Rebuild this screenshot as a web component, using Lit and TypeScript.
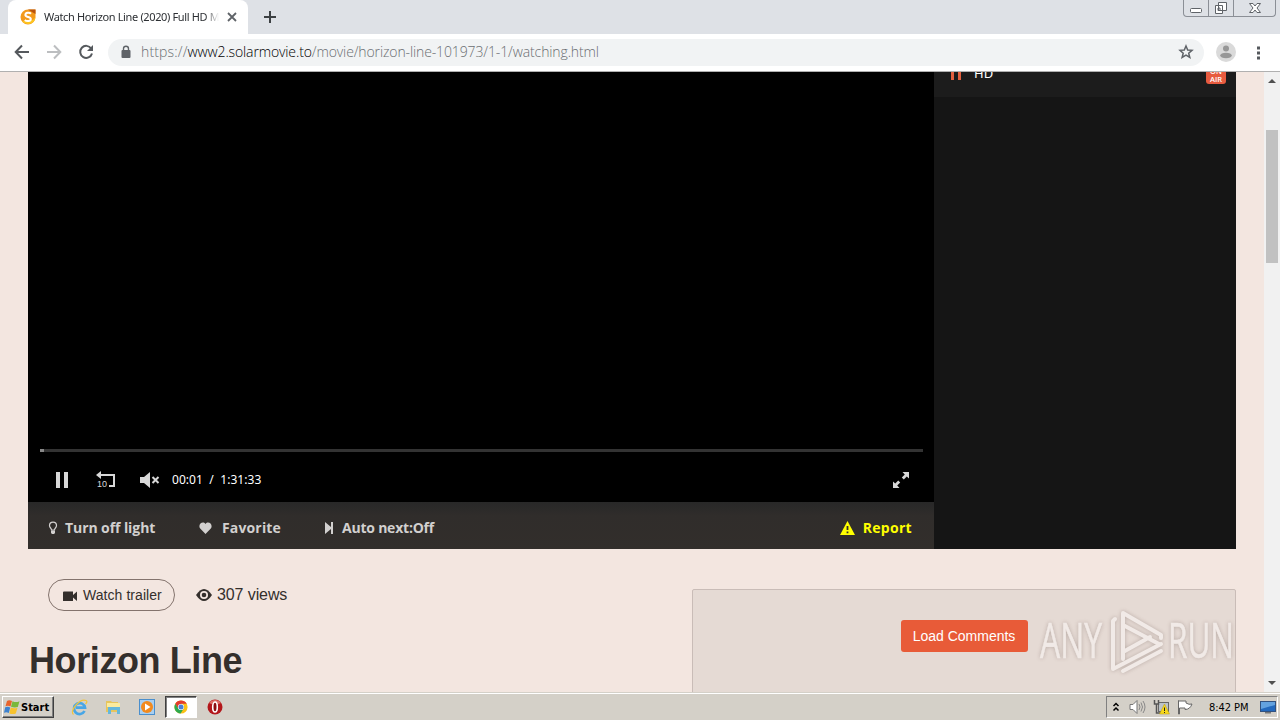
import { html, svg, css, LitElement } from 'lit';
import { customElement } from 'lit/decorators.js';

const favicon = svg`
  <svg width="16" height="16" viewBox="0 0 16 16">
    <path d="M8 .5H15.5V8A7.5 7.5 0 1 1 8 .5Z" fill="#f39a1c"/>
    <path d="M8 .5H15.5V5L12 3Z" fill="#b9540f"/>
    <path d="M2 12A7.5 7.5 0 0 0 15.5 8L13 11Z" fill="#fdc521"/>
    <path d="M11 4.7C9.5 3.2 5.4 3.4 5.4 5.9C5.4 8.6 10.8 7.4 10.8 10C10.8 12.6 6.5 12.6 4.8 11" fill="none" stroke="#fff" stroke-width="2"/>
  </svg>`;

const chromeLogo = svg`
  <svg width="14" height="14" viewBox="0 0 14 14">
    <circle cx="7" cy="7" r="6.6" fill="#fbc116"/>
    <path d="M1.3 3.7A6.6 6.6 0 0 1 12.7 3.7H7L4 8.6Z" fill="#e33b2e"/>
    <path d="M1.3 3.7A6.6 6.6 0 0 0 6.6 13.6L9.8 8.6L4.2 8.6Z" fill="#2da94f"/>
    <circle cx="7" cy="7" r="3.1" fill="#fff"/>
    <circle cx="7" cy="7" r="2.5" fill="#4a7fd6"/>
  </svg>`;

@customElement('browser-bar')
export class BrowserBar extends LitElement {
  static styles = css`
    :host {
      display: block;
      height: 72px;
      font-family: "DejaVu Sans Condensed", "DejaVu Sans", sans-serif;
    }

    .tabs {
      height: 34px;
      display: flex;
      background: #dee1e6;
    }

    .tab {
      display: flex;
      align-items: center;
      width: 240px;
      box-sizing: border-box;
      margin-left: 8px;
      padding: 0 10px 0 12px;
      background: #fff;
      border-radius: 8px 8px 0 0;
      font-size: 11px;
      color: #2c2f33;
    }

    .title {
      width: 175px;
      margin: -1px 0 0 8px;
      overflow: hidden;
      white-space: nowrap;
      font-family: "Noto Sans", sans-serif;
      letter-spacing: -0.36px;
      -webkit-mask-image: linear-gradient(to right, #000 92%, transparent);
      mask-image: linear-gradient(to right, #000 92%, transparent);
    }

    .close {
      margin-left: 8px;
    }

    .plus {
      margin: 11px 0 0 16px;
    }

    .window {
      display: flex;
      margin-left: auto;
      margin-right: 4px;
      height: 16px;
      border: 1px solid #8b8f96;
      border-top: 0;
      border-radius: 0 0 4px 4px;
    }

    .window svg + svg {
      border-left: 1px solid #8b8f96;
    }

    .toolbar {
      display: flex;
      align-items: center;
      height: 37px;
      padding-left: 14px;
      background: #fff;
      border-bottom: 1px solid #b0b0b0;
    }

    .nav {
      margin: -1px 16px 0 0;
    }

    .address {
      display: flex;
      align-items: center;
      width: 1096px;
      height: 27px;
      margin: -1px 0 0 -2px;
      box-sizing: border-box;
      padding: 0 10px 0 12px;
      border-radius: 14px;
      background: #f1f3f4;
      color: #6a6e72;
      font: 300 14px "Open Sans", sans-serif;
      white-space: nowrap;
    }

    .url {
      margin: -1px 0 0 9px;
      letter-spacing: -0.12px;
    }

    .scheme {
      letter-spacing: 0.15px;
    }

    .host {
      letter-spacing: -0.13px;
      color: #000;
    }

    .star {
      margin-left: auto;
    }

    .avatar {
      margin: -1px 20px 0 12px;
    }
  `;

  render() {
    return html`
      <div class="tabs">
        <div class="tab">
          ${favicon}
          <span class="title">Watch Horizon Line (2020) Full HD M</span>
          <svg class="close" width="10" height="10" viewBox="0 0 10 10"><path d="M1 1L9 9M9 1L1 9" stroke="#5f6368" stroke-width="1.8"/></svg>
        </div>
        <svg class="plus" width="12" height="12" viewBox="0 0 12 12"><path d="M6 0V12M0 6H12" stroke="#3c4043" stroke-width="2"/></svg>
        <div class="window">
          <svg width="24" height="16" viewBox="0 0 24 16"><rect x="6.5" y="8.500" width="11" height="4" rx="1" fill="#fff" stroke="#5f6368"/></svg>
          <svg width="24" height="16" viewBox="0 0 24 16"><path d="M9.500 2.500H17.500V10.500H9.500ZM6.500 5.500H13.500V13.500H6.500ZM9 8H11V10.500H9Z" fill="#fff" stroke="#5f6368"/></svg>
          <svg width="41" height="16" viewBox="0 0 41 16"><path d="M15.500 3.500H19L21 6L23 3.500H26.500L23 8L26.500 12.500H23L21 10L19 12.500H15.500L19 8Z" fill="#fff" stroke="#5f6368"/></svg>
        </div>
      </div>
      <div class="toolbar">
        <svg class="nav" width="16" height="16" viewBox="0 0 16 16"><path d="M15 8H2M8 1.500L1.700 8L8 14.500" fill="none" stroke="#55595d" stroke-width="2"/></svg>
        <svg class="nav" width="16" height="16" viewBox="0 0 16 16"><path d="M1 8H14M8 1.500L14.300 8L8 14.500" fill="none" stroke="#bcbec0" stroke-width="2"/></svg>
        <svg class="nav" width="16" height="16" viewBox="0 0 16 16"><path d="M13.200 4.500A6 6 0 1 0 14 9.500" fill="none" stroke="#55595d" stroke-width="2"/><path d="M15 1V7H9Z" fill="#55595d"/></svg>
        <div class="address">
          <svg width="12" height="14" viewBox="0 0 12 14"><rect x="1.500" y="5" width="9" height="8" rx="1" fill="#5f6368"/><path d="M3.500 5.500V3.700A2.500 2.500 0 0 1 8.500 3.700V5.500" fill="none" stroke="#5f6368" stroke-width="1.400"/></svg>
          <span class="url"><span class="scheme">https://</span><span class="host">www2.solarmovie.to</span>/movie/horizon-line-101973/1-1/watching.html</span>
          <svg class="star" width="16" height="16" viewBox="0 0 16 16"><path d="M8 2L9.700 6L14 6.300L10.700 9.200L11.800 13.500L8 11.200L4.100 13.500L5.200 9.200L2 6.300L6.300 6Z" fill="none" stroke="#5f6368" stroke-width="1.500"/></svg>
        </div>
        <svg class="avatar" width="20" height="20" viewBox="0 0 20 20"><circle cx="10" cy="10" r="10" fill="#dadada"/><circle cx="10" cy="6.500" r="3" fill="#979797"/><ellipse cx="10" cy="13.500" rx="5.800" ry="2.800" fill="#979797"/></svg>
        <svg width="4" height="16" viewBox="0 0 4 16"><path d="M1 1.500h3v3h-3zM1 6.500h3v3h-3zM1 11.500h3v3h-3z" fill="#55595d"/></svg>
      </div>
    `;
  }
}

@customElement('movie-page')
export class MoviePage extends LitElement {
  static styles = css`
    :host {
      display: flex;
      height: 620px;
      overflow: hidden;
      background: #f3e6e0;
      font-family: "Liberation Sans", Arial, sans-serif;
    }

    .content {
      width: 1208px;
      padding: 0 28px;
    }

    .watch {
      display: flex;
      height: 477px;
    }

    .player {
      display: flex;
      flex-direction: column;
      justify-content: flex-end;
      width: 906px;
      background: #000;
    }

    .progress {
      height: 3px;
      margin: 0 11px 0 12px;
      background: #333;
    }

    .progress i {
      display: block;
      width: 4px;
      height: 3px;
      background: #888;
    }

    .controls {
      display: flex;
      align-items: center;
      height: 50px;
      padding: 6px 24px 0 27px;
      box-sizing: border-box;
      color: #fff;
      font: 12px "Noto Sans", sans-serif;
    }

    .rewind {
      margin-left: 27px;
    }

    .mute {
      margin: 0 12px 0 23px;
    }

    .time {
      margin-top: -1px;
      white-space: pre;
      letter-spacing: 0.06px;
    }

    .full {
      margin-left: auto;
    }

    .actions {
      display: flex;
      align-items: center;
      height: 47px;
      box-sizing: border-box;
      padding: 4px 22px 0 20px;
      background: linear-gradient(#282828, #302d2b 14px, #322e2b);
      color: #d2d0cf;
      font: bold 14px "Open Sans", sans-serif;
      white-space: nowrap;
    }

    .actions span {
      margin-top: -1px;
    }

    .light {
      margin-left: 7px;
      width: 134px;
      letter-spacing: -0.08px;
    }

    .fav {
      margin-left: 10px;
      width: 102px;
      letter-spacing: 0.15px;
    }

    .next {
      margin-left: 8px;
      letter-spacing: -0.22px;
    }

    .warn {
      margin-left: auto;
    }

    .report {
      margin-left: 8px;
      color: #ff0;
      letter-spacing: 0.3px;
    }

    .servers {
      flex: 1;
      background: #151515;
    }

    .server {
      display: flex;
      height: 25px;
      padding: 0 10px 0 17px;
      background: #1c1c1c;
      overflow: hidden;
      color: #fff;
      font: 13px "Noto Sans", sans-serif;
    }

    .server .name {
      margin: -8px 0 0 13px;
    }

    .air {
      width: 20px;
      height: 20px;
      margin: -8px 0 0 auto;
      padding-top: 3px;
      box-sizing: border-box;
      border-radius: 3px;
      background: #e75b3f;
      font: 600 7.5px/8px "Open Sans", sans-serif;
      text-align: center;
    }

    .below {
      display: flex;
      justify-content: space-between;
    }

    .info {
      padding-top: 30px;
      color: #342f2c;
    }

    .meta {
      display: flex;
      align-items: center;
      padding-left: 20px;
      font-size: 16px;
    }

    .trailer {
      display: flex;
      align-items: center;
      width: 127px;
      height: 32px;
      box-sizing: border-box;
      margin-right: 21px;
      padding-left: 14px;
      border: 1px solid #83736d;
      border-radius: 16px;
      font-size: 14px;
      gap: 5px;
      white-space: nowrap;
      letter-spacing: 0.06px;
    }

    .trailer svg {
      margin-top: 2px;
    }

    .views {
      margin-left: 5px;
      letter-spacing: -0.1px;
    }

    h1 {
      margin: 29px 0 0 1px;
      font-size: 36px;
      line-height: 42px;
      letter-spacing: -0.4px;
    }

    .comments {
      width: 542px;
      height: 140px;
      margin-top: 40px;
      border: 1px solid #c9bcb7;
      border-radius: 2px;
      background: #e5dad4;
    }

    .load {
      width: 127px;
      height: 32px;
      margin: 30px auto 0;
      border-radius: 3px;
      background: #e85b38;
      color: #fff;
      font-size: 14px;
      line-height: 32px;
      text-align: center;
    }

    .scroll {
      display: flex;
      flex-direction: column;
      align-items: center;
      justify-content: space-between;
      width: 16px;
      padding: 7px 0;
      box-sizing: border-box;
      background: #f1f1f1;
    }

    .thumb {
      width: 12px;
      height: 133px;
      margin: 47px 0 auto;
      background: #c1c1c1;
    }
  `;

  render() {
    return html`
      <div class="content">
        <div class="watch">
          <div class="player">
            <div class="progress"><i></i></div>
            <div class="controls">
              <svg width="14" height="16" viewBox="0 0 14 16"><path d="M1 0h4v16h-4zM9 0h4v16h-4z" fill="#d8d8d8"/></svg>
              <svg class="rewind" width="21" height="18" viewBox="0 0 21 18"><path d="M5 4H18V15H13" fill="none" stroke="#d8d8d8" stroke-width="2"/><path d="M0 4L5 0V8Z" fill="#d8d8d8"/><text x="1" y="16" fill="#d8d8d8" font-size="9" font-family="Liberation Sans">10</text></svg>
              <svg class="mute" width="20" height="16" viewBox="0 0 20 16"><path d="M0 5H4L10 0V16L4 11H0Z" fill="#d8d8d8"/><path d="M12.500 5L18.500 11M18.500 5L12.500 11" stroke="#d8d8d8" stroke-width="2"/></svg>
              <span class="time">00:01  /  1:31:33</span>
              <svg class="full" width="18" height="18" viewBox="0 0 18 18"><path d="M10.500 1H17V7.500L14.800 5.500L11.800 8.500L9.800 6.500L12.800 3.500ZM7.500 17H1V10.500L3.200 12.500L6.200 9.500L8.200 11.500L5.200 14.500Z" fill="#d8d8d8"/></svg>
            </div>
            <div class="actions">
              <svg width="10" height="14" viewBox="0 0 10 14"><path d="M3.500 9C3.500 7 1.500 7 1.500 4.600A3.500 3.500 0 0 1 8.500 4.600C8.500 7 6.500 7 6.500 9Z" fill="none" stroke="#d2d0cf" stroke-width="1.200"/><path d="M3 9.500h4v2.500l-1 1h-2l-1-1z" fill="#d2d0cf"/></svg>
              <span class="light">Turn off light</span>
              <svg width="13" height="12" viewBox="0 0 13 12"><path d="M6.500 12L1.200 6.600C-1.600 3 3.500-1.800 6.500 2C9.500-1.800 14.600 3 11.800 6.600Z" fill="#d2d0cf"/></svg>
              <span class="fav">Favorite</span>
              <svg width="10" height="12" viewBox="0 0 10 12"><path d="M1 0L7 5V0H9V12H7V7L1 12Z" fill="#d2d0cf"/></svg>
              <span class="next">Auto next:Off</span>
              <svg class="warn" width="15" height="14" viewBox="0 0 15 14"><path d="M7.500 0L15 14H0Z" fill="#ff0"/><path d="M7.500 5V9M7.500 10.500V12.300" stroke="#322e2b" stroke-width="1.800"/></svg>
              <span class="report">Report</span>
            </div>
          </div>
          <div class="servers">
            <div class="server">
              <svg width="10" height="8" viewBox="0 0 10 8"><path d="M0 0h3v8h-3zM7 0h3v8h-3z" fill="#e3603f"/></svg>
              <span class="name">HD</span>
              <div class="air">ON<br>AIR</div>
            </div>
          </div>
        </div>
        <div class="below">
          <div class="info">
            <div class="meta">
              <div class="trailer">
                <svg width="15" height="10" viewBox="0 0 15 10"><path d="M0 1.500Q0 .5 1 .5H10V4L14 .5V10L10 6.500V10H0Z" fill="#342f2c"/></svg>
                Watch trailer
              </div>
              <svg width="16" height="12" viewBox="0 0 16 12"><path d="M0 6Q8-6 16 6Q8 18 0 6Z" fill="#342f2c"/><circle cx="8" cy="6" r="4" fill="#f3e6e0"/><circle cx="8" cy="6" r="2.300" fill="#342f2c"/></svg>
              <span class="views">307 views</span>
            </div>
            <h1>Horizon Line</h1>
          </div>
          <div class="comments"><div class="load">Load Comments</div></div>
        </div>
      </div>
      <div class="scroll">
        <svg width="8" height="4" viewBox="0 0 8 4"><path d="M0 4L4 0L8 4Z" fill="#505050"/></svg>
        <div class="thumb"></div>
        <svg width="8" height="4" viewBox="0 0 8 4"><path d="M0 0H8L4 4Z" fill="#505050"/></svg>
      </div>
    `;
  }
}

@customElement('task-bar')
export class TaskBar extends LitElement {
  static styles = css`
    :host {
      display: flex;
      align-items: flex-start;
      height: 28px;
      box-sizing: border-box;
      padding: 3px 2px 0;
      border-top: 1px solid #d4d0c8;
      box-shadow: inset 0 1px #fff;
      background: #d4d0c8;
      color: #000;
      font: 11px "DejaVu Sans Condensed", "DejaVu Sans", sans-serif;
    }

    .start {
      display: flex;
      align-items: center;
      width: 52px;
      height: 22px;
      box-sizing: border-box;
      padding-left: 1px;
      gap: 1px;
      border: 1px solid;
      border-color: #fff #404040 #404040 #fff;
      box-shadow: inset -1px -1px #808080;
      font-weight: bold;
      white-space: nowrap;
    }

    .items {
      display: flex;
      align-items: center;
      height: 22px;
      margin-left: 8px;
    }

    .item {
      display: flex;
      justify-content: center;
      width: 34px;
    }

    .active {
      align-items: center;
      width: 32px;
      height: 22px;
      box-sizing: border-box;
      margin: 0 1px;
      border: 1px solid;
      border-color: #404040 #fff #fff #404040;
      box-shadow: inset 1px 1px #808080;
      background: #fff;
    }

    .tray {
      display: flex;
      align-items: center;
      width: 172px;
      height: 22px;
      box-sizing: border-box;
      margin-left: auto;
      padding-left: 5px;
      border: 1px solid;
      border-color: #808080 #fff #fff #808080;
      white-space: nowrap;
    }

    .sound {
      margin-left: 9px;
    }

    .net,
    .flag {
      margin-left: 7px;
    }

    .clock {
      width: 42px;
      margin: 0 9px 0 16px;
      letter-spacing: -0.05px;
    }
  `;

  render() {
    return html`
      <div class="start">
        <svg width="16" height="16" viewBox="0 0 16 16">
          <path d="M3 2Q5 .5 8 2L6.500 7.500Q4 6 1.500 7.200Z" fill="#e8642c"/>
          <path d="M8.500 2.200Q12 4 15.500 2.200L13.800 8Q10.500 9 7 7.700Z" fill="#79b83b"/>
          <path d="M1.200 8.200Q3.800 7 6.200 8.400L4.800 14Q2.300 12.600 0 13.800Z" fill="#3d82cf"/>
          <path d="M6.800 8.600Q10.200 9.900 13.500 8.700L11.800 14.500Q8.800 15.700 5.300 14.400Z" fill="#f7c22d"/>
        </svg>
        Start
      </div>
      <div class="items">
        <div class="item">
          <svg width="17" height="17" viewBox="0 0 17 17"><path d="M13.500 12A5.500 5.500 0 1 1 14 8.700H5" fill="none" stroke="#48a6e6" stroke-width="2.700"/><path d="M2.500 15.500C-2 12 9-1 15 1.500Q17 2.500 14.500 5" fill="none" stroke="#f1c43d" stroke-width="1.200"/></svg>
        </div>
        <div class="item">
          <svg width="16" height="16" viewBox="0 0 16 16"><path d="M1 2H6L7 3H13V13H1Z" fill="#e6c55e"/><path d="M2 4H15V8H2Z" fill="#fbeb9e"/><path d="M3 8H15V15H12V11H6V15H3Z" fill="#65b7dc"/></svg>
        </div>
        <div class="item">
          <svg width="16" height="16" viewBox="0 0 16 16"><rect x=".5" y=".5" width="15" height="15" fill="#a9cff0" stroke="#4a8fcd"/><circle cx="8" cy="8" r="6" fill="#f28a1e"/><path d="M6 4.500L11.500 8L6 11.500Z" fill="#fff"/></svg>
        </div>
        <div class="item active">${chromeLogo}</div>
        <div class="item">
          <svg width="16" height="16" viewBox="0 0 16 16"><circle cx="8" cy="8" r="7.500" fill="#b3161b"/><path d="M2 4A7 6 0 0 1 14 4Q8 7 2 4Z" fill="#dd6b65"/><ellipse cx="8" cy="8" rx="2.300" ry="5" fill="#8c0d11" stroke="#fff" stroke-width="1.600"/></svg>
        </div>
      </div>
      <div class="tray">
        <svg width="8" height="10" viewBox="0 0 8 10"><path d="M1.500 4L4 1.500L6.500 4M1.500 8.500L4 6L6.500 8.500" fill="none" stroke="#000" stroke-width="1.500"/></svg>
        <svg class="sound" width="17" height="16" viewBox="0 0 17 16"><path d="M1 5.500H4L8 1.500V14.500L4 10.500H1Z" fill="#fff" stroke="#777"/><path d="M10 5Q12 8 10 11M12 3.500Q15 8 12 12.500M14 2Q18 8 14 14" fill="none" stroke="#888"/></svg>
        <svg class="net" width="17" height="16" viewBox="0 0 17 16"><rect x="5.500" y="3.500" width="10" height="9" fill="#bcc3c9" stroke="#666"/><path d="M1.500 1V5H5.500V1M3.500 5V14H8" fill="none" stroke="#555" stroke-width="1.500"/><path d="M11.500 5L16.500 15H6.500Z" fill="#f8d91b" stroke="#b99810" stroke-width=".5"/><path d="M11.500 8.500V12M11.500 13V14" stroke="#222"/></svg>
        <svg class="flag" width="16" height="16" viewBox="0 0 16 16"><path d="M1.500 1.500V15H2.500V9H8V10.500Q13 10.500 15 5Q12 6 9 4V2H2Z" fill="#fff" stroke="#666"/></svg>
        <span class="clock">8:42 PM</span>
        <svg width="16" height="14" viewBox="0 0 16 14"><rect x=".5" y="1.500" width="15" height="10" fill="#2369bd" stroke="#31517f"/><path d="M1 2H15V5L1 9Z" fill="#63a2df"/><path d="M5 12H11V13.500H5Z" fill="#777"/></svg>
      </div>
    `;
  }
}

@customElement('app-root')
export class AppRoot extends LitElement {
  static styles = css`
    :host {
      display: block;
      position: relative;
      width: 1280px;
      height: 720px;
      overflow: hidden;
    }

    .mark {
      position: absolute;
      left: 1034px;
      top: 602px;
      filter: drop-shadow(0 0 2px rgba(90, 70, 65, 0.4));
      opacity: 0.8;
    }

    .mark text {
      font-family: "Open Sans", sans-serif;
      font-weight: 400;
      font-size: 50px;
      fill: #f5efec;
      stroke: #f5efec;
      stroke-width: 0.6px;
    }
  `;

  render() {
    return html`
      <browser-bar></browser-bar>
      <movie-page></movie-page>
      <task-bar></task-bar>
      <svg class="mark" width="210" height="86" viewBox="0 0 210 86">
        <text x="6" y="56" textLength="62" lengthAdjust="spacingAndGlyphs">ANY</text>
        <text x="134" y="56" textLength="66" lengthAdjust="spacingAndGlyphs">RUN</text>
        <g fill="none" stroke="#f5efec" stroke-width="4" stroke-linejoin="round" stroke-linecap="round">
          <path d="M81 17L79 19V67L127 42"/>
          <path d="M89 57V11L127 33V36"/>
          <path d="M89 23L125 42M89 69L127 49M89 50L116 35"/>
        </g>
      </svg>
    `;
  }
}
